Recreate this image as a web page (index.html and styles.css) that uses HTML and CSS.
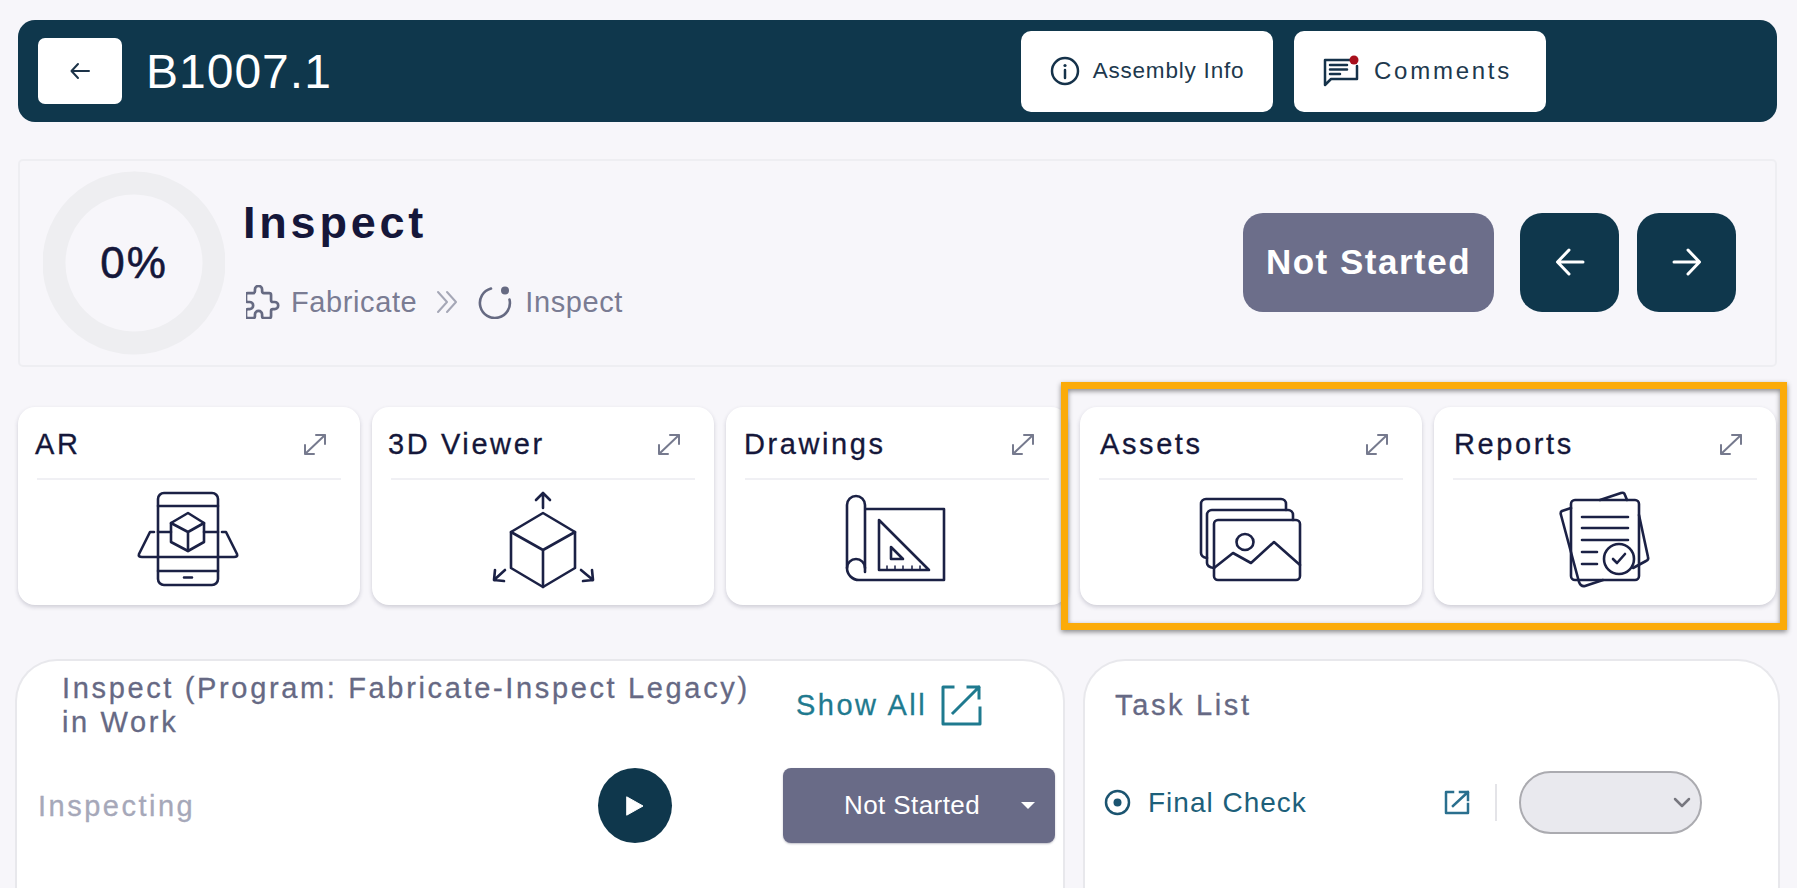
FILE: index.html
```html
<!DOCTYPE html>
<html lang="en">
<head>
  <meta charset="UTF-8" />
  <title>B1007.1 - Inspect</title>
  <link rel="stylesheet" href="styles.css">
</head>
<body>
  <div class="page">
    <!-- Top bar -->
    <div class="topbar">
      <button class="back-button">
        <svg width="22" height="18" viewBox="0 0 22 18"><path d="M20 9H3M9 2L2.500 9L9 16"/></svg>
      </button>
      <div class="assembly-name">B1007.1</div>
      <div class="topbar-actions">
        <button class="top-button">
          <svg class="info-icon" width="30" height="30" viewBox="0 0 30 30">
            <circle cx="15" cy="15" r="13"/>
            <path d="M15 14v8"/>
            <circle class="solid" cx="15" cy="9.500" r="1.600"/>
          </svg>
          <span>Assembly Info</span>
        </button>
        <button class="top-button top-button-wide">
          <svg class="comment-icon" width="36" height="32" viewBox="0 0 36 32">
            <path d="M27 5H2V30l6-6H34V11"/>
            <path d="M7 10h17M7 14.500h17M7 19h10"/>
            <circle class="dot" cx="31" cy="5" r="4.500"/>
          </svg>
          <span>Comments</span>
        </button>
      </div>
    </div>

    <!-- Station summary -->
    <div class="summary">
      <div class="donut">
        <svg width="182" height="186" viewBox="0 0 182 186">
          <circle cx="91" cy="93" r="80"/>
        </svg>
        <div class="donut-label">0%</div>
      </div>
      <div class="summary-text">
        <div class="summary-title">Inspect</div>
        <div class="crumbs">
          <svg class="crumb-icon" width="34" height="34" viewBox="3 2.500 19 19">
            <path d="M4 7h3a1 1 0 0 0 1 -1v-1a2 2 0 0 1 4 0v1a1 1 0 0 0 1 1h3a1 1 0 0 1 1 1v3a1 1 0 0 0 1 1h1a2 2 0 0 1 0 4h-1a1 1 0 0 0 -1 1v3a1 1 0 0 1 -1 1h-3a1 1 0 0 1 -1 -1v-1a2 2 0 0 0 -4 0v1a1 1 0 0 1 -1 1h-3a1 1 0 0 1 -1 -1v-3a1 1 0 0 1 1 -1h1a2 2 0 0 0 0 -4h-1a1 1 0 0 1 -1 -1v-3a1 1 0 0 1 1 -1"/>
          </svg>
          <span class="crumb-first">Fabricate</span>
          <svg class="crumb-sep" width="22" height="24" viewBox="0 0 22 24"><path d="M2 2l9 10l-9 10M11 2l9 10l-9 10"/></svg>
          <svg class="crumb-icon crumb-icon-station" width="34" height="34" viewBox="0 0 34 34">
            <path d="M13 3.500A15 15 0 1 0 31.500 14.500"/>
            <circle class="solid" cx="27" cy="5.500" r="4"/>
          </svg>
          <span class="crumb-last">Inspect</span>
        </div>
      </div>
      <div class="summary-actions">
        <div class="status-pill">Not Started</div>
        <button class="nav-button">
          <svg width="30" height="28" viewBox="0 0 30 28"><path d="M28 14H3M14 2L2.500 14L14 26"/></svg>
        </button>
        <button class="nav-button">
          <svg width="30" height="28" viewBox="0 0 30 28"><path d="M2 14H27M16 2L27.500 14L16 26"/></svg>
        </button>
      </div>
    </div>

    <!-- Tool tiles -->
    <div class="tiles">
      <div class="tile">
        <div class="tile-head">
          <span>AR</span>
          <svg class="expand-icon" width="24" height="23" viewBox="0 0 24 23"><path d="M2 21L22 2M13 2h9v9M2 12v9h9"/></svg>
        </div>
        <svg class="tile-icon" width="120" height="110" viewBox="0 0 120 110">
          <rect x="29" y="8" width="60" height="92" rx="6"/>
          <path d="M29 21H89M29 86H89M55 92.500H63"/>
          <path d="M25 47H21L10 69Q9 72 13 72H105Q109 72 108 69L97 47H93"/>
          <path d="M29 47H42M75 47H89"/>
          <path d="M59 28L75 38V57L59 66L42 57V38Z"/>
          <path d="M42 38L59 47L75 38M59 47V66"/>
        </svg>
      </div>
      <div class="tile">
        <div class="tile-head">
          <span>3D Viewer</span>
          <svg class="expand-icon" width="24" height="23" viewBox="0 0 24 23"><path d="M2 21L22 2M13 2h9v9M2 12v9h9"/></svg>
        </div>
        <svg class="tile-icon" width="120" height="110" viewBox="0 0 120 110">
          <path d="M60 28L92 47V83L60 102L28 83V47Z"/>
          <path d="M28 47L60 65L92 47M60 65V102"/>
          <path d="M60 23V8M53 15L60 8L67 15"/>
          <path d="M22 85L11 95M12 85L11 95L21 96"/>
          <path d="M98 85L110 95M109 85L110 95L100 96"/>
        </svg>
      </div>
      <div class="tile">
        <div class="tile-head">
          <span>Drawings</span>
          <svg class="expand-icon" width="24" height="23" viewBox="0 0 24 23"><path d="M2 21L22 2M13 2h9v9M2 12v9h9"/></svg>
        </div>
        <svg class="tile-icon" width="120" height="110" viewBox="0 0 120 110">
          <path d="M28 24H107V95H22A12 12 0 0 1 10 83V20A9 9 0 0 1 28 20V87"/>
          <path d="M10 83A9 9 0 0 1 28 83"/>
          <path d="M42 35L92 85H42Z"/>
          <path d="M54 62L66 74H54Z"/>
          <path class="thin" d="M50 85V81M58 85V81M66 85V81M75 85V81M83 85V81"/>
        </svg>
      </div>
      <div class="tile">
        <div class="tile-head">
          <span>Assets</span>
          <svg class="expand-icon" width="24" height="23" viewBox="0 0 24 23"><path d="M2 21L22 2M13 2h9v9M2 12v9h9"/></svg>
        </div>
        <svg class="tile-icon" width="120" height="110" viewBox="0 0 120 110">
          <rect x="23" y="35" width="86" height="60" rx="4"/>
          <path d="M16 73Q10 72 10 68V19A5 5 0 0 1 15 14H90A5 5 0 0 1 95 19V25"/>
          <path d="M23 83Q16 82 16 78V30A5 5 0 0 1 21 25H97A5 5 0 0 1 102 30V35"/>
          <ellipse cx="54" cy="57" rx="8.500" ry="8"/>
          <path d="M23 83L42 68L60 78L83 57L109 80"/>
        </svg>
      </div>
      <div class="tile">
        <div class="tile-head">
          <span>Reports</span>
          <svg class="expand-icon" width="24" height="23" viewBox="0 0 24 23"><path d="M2 21L22 2M13 2h9v9M2 12v9h9"/></svg>
        </div>
        <svg class="tile-icon" width="120" height="110" viewBox="0 0 120 110">
          <path d="M55 15L76 8Q79 7 80 10L82 15"/>
          <path d="M26 23L17 26Q15 27 16 30L34 97Q36 102 40 101L58 95"/>
          <path d="M94 30L103 72Q104 75 101 76L88 83"/>
          <rect x="26" y="15" width="68" height="80" rx="4"/>
          <path d="M37 32H83M37 43H83M37 55H83M37 67H52M37 79H52"/>
          <circle cx="74" cy="74" r="15"/>
          <path d="M68 74L72 78L80 69"/>
        </svg>
      </div>
    </div>

    <!-- Work panels -->
    <div class="panels">
      <div class="panel panel-work">
        <div class="work-head">
          <div class="panel-title">Inspect (Program: Fabricate-Inspect Legacy) in Work</div>
          <div class="show-all">
            <span>Show All</span>
            <svg width="42" height="42" viewBox="0 0 42 42"><path d="M13 3H3V40H40V24"/><path d="M13 29L39 3M28 3H39V14"/></svg>
          </div>
        </div>
        <div class="work-row">
          <div class="work-label">Inspecting</div>
          <button class="play-button">
            <svg width="18" height="20" viewBox="0 0 18 20"><path d="M1 1L17 10L1 19Z"/></svg>
          </button>
          <div class="status-select">
            <span>Not Started</span>
            <i class="caret"></i>
          </div>
        </div>
      </div>
      <div class="panel panel-tasks">
        <div class="panel-title">Task List</div>
        <div class="task-row">
          <svg class="radio-icon" width="27" height="27" viewBox="0 0 27 27">
            <circle cx="13.500" cy="13.500" r="11.500"/>
            <circle class="solid" cx="13.500" cy="13.500" r="4"/>
          </svg>
          <div class="task-name">Final Check</div>
          <svg class="task-link" width="26" height="25" viewBox="0 0 26 25"><path d="M9 2H2V23H24V14"/><path d="M9 16L24 2M16 2H24V10"/></svg>
          <div class="task-divider"></div>
          <div class="task-select">
            <svg width="18" height="11" viewBox="0 0 18 11"><path d="M2 2L9 9L16 2"/></svg>
          </div>
        </div>
      </div>
    </div>

    <!-- Callout around Assets and Reports -->
    <div class="callout"></div>
  </div>
</body>
</html>
```
FILE: styles.css
```css
* {
  box-sizing: border-box;
  margin: 0;
  padding: 0;
}

:root {
  --navy: #0f374c;
  --ink: #15173a;
  --line: #f0f0f4;
  --teal: #1f7a8f;
}

html,
body {
  height: 888px;
  overflow: hidden;
}

body {
  background: #f7f6fa;
  font-family: "Liberation Sans", Arial, sans-serif;
  color: var(--ink);
}

button {
  border: none;
  font-family: inherit;
  cursor: pointer;
}

svg {
  display: block;
  flex-shrink: 0;
  fill: none;
  stroke-linecap: round;
  stroke-linejoin: round;
}

.page {
  position: relative;
  height: 888px;
  padding: 20px 17px 0 15px;
}

/* Top bar */
.topbar {
  display: flex;
  align-items: center;
  height: 102px;
  margin: 0 3px 37px;
  padding-left: 20px;
  background: var(--navy);
  border-radius: 17px;
}

.back-button {
  display: flex;
  align-items: center;
  justify-content: center;
  width: 84px;
  height: 66px;
  background: #fff;
  border-radius: 7px;
}

.back-button svg path {
  stroke: #1c3348;
  stroke-width: 2;
}

.assembly-name {
  margin-left: 24px;
  font-size: 48px;
  letter-spacing: 1px;
  color: #fff;
}

.topbar-actions {
  display: flex;
  gap: 21px;
  margin-left: auto;
  padding-right: 231px;
}

.top-button {
  display: flex;
  align-items: center;
  justify-content: center;
  gap: 13px;
  width: 252px;
  height: 81px;
  background: #fff;
  border-radius: 10px;
  font-size: 22.500px;
  letter-spacing: 0.800px;
  color: #20384d;
}

.top-button-wide {
  gap: 15px;
  padding-right: 5px;
  font-size: 24px;
  letter-spacing: 2.750px;
}

.info-icon circle,
.info-icon path {
  stroke: #15324a;
  stroke-width: 2.500;
}

.comment-icon path {
  stroke: #15324a;
  stroke-width: 2.500;
}

.info-icon .solid {
  fill: #15324a;
  stroke: none;
}

.comment-icon .dot {
  fill: #a80f1c;
}

/* Summary */
.summary {
  display: flex;
  align-items: center;
  height: 208px;
  margin: 0 3px 40px;
  padding: 0 39px 0 23px;
  border: 2px solid #eeeef2;
  border-radius: 5px;
}

.donut {
  display: grid;
  place-items: center;
}

.donut > * {
  grid-area: 1 / 1;
}

.donut circle {
  stroke: #eeeef1;
  stroke-width: 23;
  stroke-dasharray: 39.900 2;
  stroke-dashoffset: -1;
  transform: rotate(-90deg);
  transform-origin: 91px 93px;
}

.donut-label {
  font-size: 44px;
  letter-spacing: 2px;
  -webkit-text-stroke: 0.600px var(--ink);
}

.summary-text {
  align-self: flex-start;
  margin: 37px 0 0 18px;
}

.summary-title {
  height: 50px;
  font-size: 45px;
  line-height: 50px;
  font-weight: 700;
  letter-spacing: 3.800px;
}

.crumbs {
  display: flex;
  align-items: center;
  height: 44px;
  margin-top: 32px;
  padding-left: 3px;
  font-size: 29px;
  letter-spacing: 0.600px;
  color: #7a7c93;
}

.crumb-icon path,
.crumb-icon circle {
  stroke: #666a82;
  stroke-width: 1.500;
}

.crumb-icon-station path {
  stroke-width: 2.600;
}

.crumb-icon .solid {
  fill: #666a82;
  stroke: none;
}

.crumb-first {
  margin-left: 11px;
}

.crumb-sep {
  margin: 0 20px 0 19px;
}

.crumb-sep path {
  stroke: #a5a7b6;
  stroke-width: 2;
}

.crumb-last {
  margin-left: 13px;
}

.summary-actions {
  display: flex;
  align-items: center;
  margin-left: auto;
  margin-bottom: 2px;
}

.status-pill {
  display: flex;
  align-items: center;
  justify-content: center;
  width: 251px;
  height: 99px;
  margin-right: 26px;
  background: #6c6e8a;
  border-radius: 20px;
  font-size: 35px;
  font-weight: 700;
  letter-spacing: 1.500px;
  color: #fff;
}

.nav-button {
  display: flex;
  align-items: center;
  justify-content: center;
  width: 99px;
  height: 99px;
  background: var(--navy);
  border-radius: 22px;
}

.nav-button + .nav-button {
  margin-left: 18px;
}

.nav-button path {
  stroke: #fff;
  stroke-width: 3;
}

/* Tiles */
.tiles {
  display: grid;
  grid-template-columns: repeat(5, 342px);
  gap: 12px;
  margin: 0 3px 54px;
}

.tile {
  height: 198px;
  background: #fff;
  border-radius: 17px;
  box-shadow: 0 2px 4px rgba(40, 40, 70, 0.2);
}

.tile-head {
  display: flex;
  align-items: center;
  justify-content: space-between;
  height: 73px;
  margin: 0 19px;
  padding: 3px 14px 0 0;
  border-bottom: 2px solid var(--line);
  font-size: 29px;
  letter-spacing: 2.600px;
  -webkit-text-stroke: 0.300px var(--ink);
}

.tile:nth-child(n + 4) .tile-head span {
  margin-left: 1px;
}

.tile:nth-child(1) .tile-head span {
  margin-left: -2px;
}

.tile:nth-child(2) .tile-head span {
  margin-left: -3px;
}

.tile:nth-child(3) .tile-head span {
  margin-left: -1px;
}

.expand-icon path {
  stroke: #767a8e;
  stroke-width: 2;
}

.tile-icon {
  margin: 5px auto 0;
}

.tile-icon > * {
  stroke: #1b2145;
  stroke-width: 2.600;
}

.tile-icon .thin {
  stroke-width: 1.500;
}

/* Panels */
.panels {
  display: flex;
  gap: 18px;
}

.panel {
  height: 260px;
  background: #fff;
  border: 2px solid #e8e8ec;
  border-bottom: none;
  border-radius: 42px 42px 0 0;
}

.panel-work {
  width: 1050px;
}

.panel-tasks {
  width: 697px;
  padding-top: 27px;
}

.panel-title {
  font-size: 29px;
  line-height: 34px;
  letter-spacing: 2.650px;
  color: #666984;
  -webkit-text-stroke: 0.300px #666984;
}

.panel-tasks .panel-title {
  margin-left: 30px;
}

.work-head {
  display: flex;
  align-items: center;
  height: 80px;
  padding: 8px 0 0 45px;
}

.work-head .panel-title {
  width: 704px;
}

.show-all {
  display: flex;
  align-items: center;
  gap: 13px;
  margin-left: 30px;
  font-size: 29px;
  letter-spacing: 2.500px;
  color: var(--teal);
  -webkit-text-stroke: 0.300px var(--teal);
}

.show-all path {
  stroke: var(--teal);
  stroke-width: 3;
  stroke-linecap: square;
}

.work-row {
  display: flex;
  align-items: center;
  margin-top: 27px;
  padding: 0 8px 0 21px;
}

.work-label {
  flex: 1;
  padding-top: 2px;
  font-size: 29px;
  letter-spacing: 2.500px;
  color: #a6a8b9;
  -webkit-text-stroke: 0.300px #a6a8b9;
}

.play-button {
  display: flex;
  align-items: center;
  justify-content: center;
  width: 74px;
  height: 75px;
  margin-right: 111px;
  background: var(--navy);
  border-radius: 50%;
}

.play-button path {
  fill: #fff;
  stroke: #fff;
}

.status-select {
  display: flex;
  align-items: center;
  justify-content: flex-end;
  width: 272px;
  height: 75px;
  padding-right: 20px;
  background: #696b87;
  border-radius: 8px;
  box-shadow: 0 1px 2px rgba(40, 40, 70, 0.3);
  font-size: 26px;
  letter-spacing: 0.400px;
  color: #fff;
}

.caret {
  width: 0;
  height: 0;
  margin-left: 41px;
  border-left: 7px solid transparent;
  border-right: 7px solid transparent;
  border-top: 7px solid #fff;
}

.task-row {
  display: flex;
  align-items: center;
  height: 63px;
  margin-top: 49px;
  padding: 0 76px 0 19px;
}

.radio-icon circle {
  stroke: #1b5470;
  stroke-width: 2.500;
}

.radio-icon .solid {
  fill: #1b5470;
  stroke: none;
}

.task-name {
  flex: 1;
  margin-left: 17px;
  font-size: 28px;
  letter-spacing: 1px;
  color: #1d5f7a;
}

.task-link path {
  stroke: #2a6f8e;
  stroke-width: 2.500;
  stroke-linecap: square;
}

.task-divider {
  width: 2px;
  height: 37px;
  margin: 0 22px 0 25px;
  background: #e4e4e8;
}

.task-select {
  display: flex;
  align-items: center;
  justify-content: flex-end;
  width: 183px;
  height: 63px;
  padding-right: 9px;
  background: #e9e9ee;
  border: 2px solid #ababb0;
  border-radius: 32px;
}

.task-select path {
  stroke: #77777f;
  stroke-width: 2.500;
}

/* Callout */
.callout {
  position: absolute;
  left: 1061px;
  top: 382px;
  width: 726px;
  height: 248px;
  border: 7px solid #fbab09;
  box-shadow: 0 2px 5px rgba(0, 0, 0, 0.45), inset 0 2px 5px rgba(0, 0, 0, 0.45);
}
```
